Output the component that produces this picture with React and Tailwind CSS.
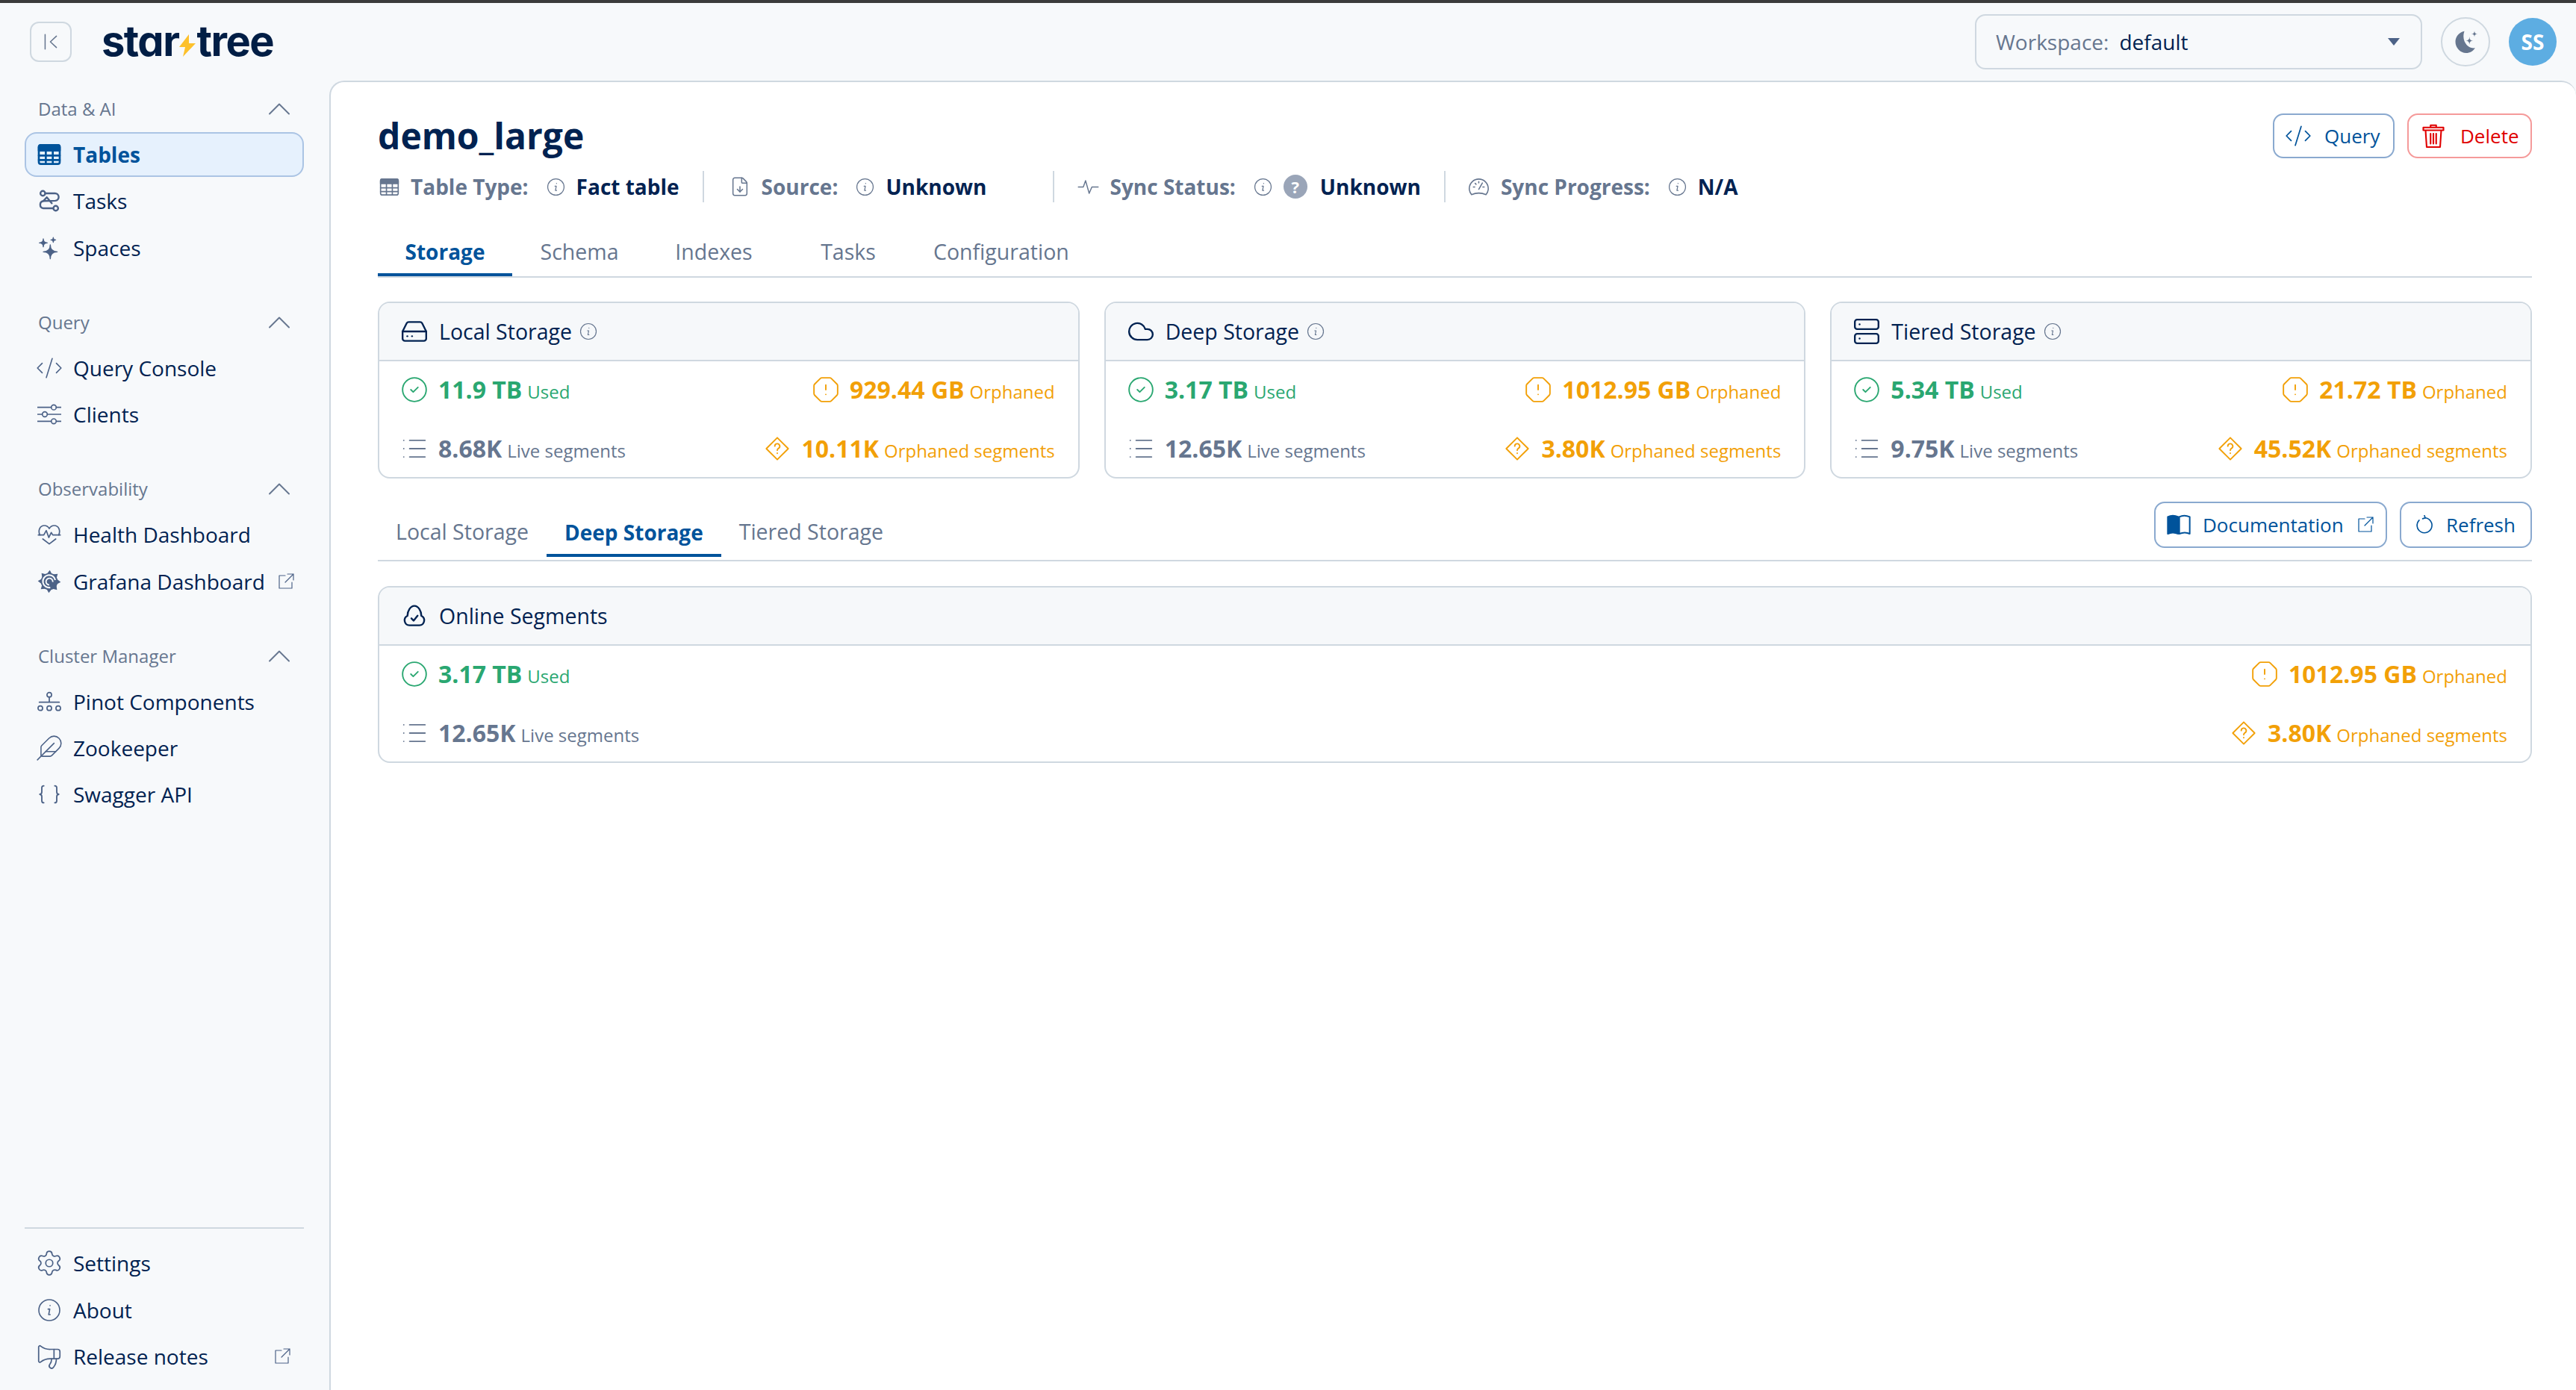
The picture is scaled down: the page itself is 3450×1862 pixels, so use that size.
import {
  ChevronUp, CodeXml, Feather, Settings, Megaphone, Cloud, Server, HardDrive,
  CircleCheck, OctagonAlert, List, FileDown,
} from 'lucide-react';

const star = (cx, cy, r) =>
  `M${cx} ${cy - r}Q${cx} ${cy} ${cx + r} ${cy}Q${cx} ${cy} ${cx} ${cy + r}Q${cx} ${cy} ${cx - r} ${cy}Q${cx} ${cy} ${cx} ${cy - r}Z`;

const Svg = ({ className = '', sw = 1.5, box = '0 0 24 24', children }) => (
  <svg viewBox={box} fill="none" stroke="currentColor" strokeWidth={sw} strokeLinecap="round" strokeLinejoin="round" className={`shrink-0 ${className}`}>
    {children}
  </svg>
);

const TableIcon = ({ className, filled }) => (
  <Svg className={className} sw={filled ? 2 : 1.5}>
    <rect x="1.5" y="2.5" width="21" height="19" rx="2" />
    <path d="M1.5 4.5a2 2 0 0 1 2-2h17a2 2 0 0 1 2 2V8h-21z" fill="currentColor" />
    <path d="M1.5 13h21M1.5 17.5h21M8.5 8v13.5M15.5 8v13.5" />
  </Svg>
);
const TasksIcon = ({ className }) => (
  <Svg className={className} sw={1.8}>
    <circle cx="5.5" cy="4.5" r="2.4" />
    <circle cx="18.5" cy="19.5" r="2.4" />
    <path d="M8 4.5h9.5a3.7 3.7 0 0 1 .5 7.4L6 12.2a3.7 3.7 0 0 0 0 7.3h10" />
    <path d="M9.5 8.5l5 6M6 12.200l3.500-3.700" />
  </Svg>
);
const SparkIcon = ({ className }) => (
  <svg viewBox="0 0 24 24" fill="currentColor" stroke="currentColor" strokeWidth="1" strokeLinejoin="round" className={`shrink-0 ${className}`}>
    <path d={star(13, 16, 7)} />
    <path d={star(6, 7, 4)} />
    <path d={star(16, 4, 2.4)} />
  </svg>
);
const SlidersIcon = ({ className }) => (
  <Svg className={className} sw={1.2}>
    <path d="M0 5h14M19 5h5M0 12h5M10 12h14M0 19h14M19 19h5" />
    <circle cx="16.500" cy="5" r="2.500" />
    <circle cx="7.500" cy="12" r="2.500" />
    <circle cx="16.500" cy="19" r="2.500" />
  </Svg>
);
const HeartIcon = ({ className }) => (
  <Svg className={className} sw={1.3}>
    <path d="M2.500 12.500C.5 8 2.500 3 7 3c2.500 0 4 1.300 5 3 1-1.700 2.500-3 5-3 4.500 0 6.500 5 4.500 9.500" />
    <path d="M1 12.500h5.500l2.500-4.500 2.500 7 2.500-5 1.500 2.500H23" />
    <path d="M5.500 16.500L12 21.500l6.500-5" />
  </Svg>
);
const GrafanaIcon = ({ className }) => (
  <svg viewBox="0 0 24 24" className={`shrink-0 ${className}`}>
    {[0, 45, 90, 135, 180, 225, 270, 315].map((a) => (
      <path key={a} d="M9 5L12.500 .5 15 5z" fill="currentColor" transform={`rotate(${a} 12 12)`} />
    ))}
    <circle cx="12" cy="12" r="8.500" fill="currentColor" />
    <path d="M18 10.500A6.300 6.300 0 1 0 13 18" fill="none" stroke="#f7f9fb" strokeWidth="1.600" />
    <path d="M15.500 12.500a3.400 3.400 0 1 0-3.500 3" fill="none" stroke="#f7f9fb" strokeWidth="1.400" />
  </svg>
);
const SitemapIcon = ({ className }) => (
  <Svg className={className} sw={1.3}>
    <circle cx="12" cy="5" r="2.300" />
    <path d="M12 7.500v5M2 12.500h20" />
    <circle cx="3" cy="18.500" r="2.300" />
    <circle cx="12" cy="18.500" r="2.300" />
    <circle cx="21" cy="18.500" r="2.300" />
  </Svg>
);
const BracesIcon = ({ className }) => (
  <Svg className={className} sw={1.4}>
    <path d="M6.500 3.500c-1.500 0-2 .8-2 2v4c0 1.300-.7 2.300-2 2.500 1.300.2 2 1.200 2 2.500v4c0 1.200.5 2 2 2" />
    <path d="M17.500 3.500c1.500 0 2 .8 2 2v4c0 1.300.7 2.300 2 2.500-1.300.2-2 1.200-2 2.500v4c0 1.200-.5 2-2 2" />
  </Svg>
);
const InfoIcon = ({ className }) => (
  <Svg className={className} sw={1.2}>
    <circle cx="12" cy="12" r="10.500" />
    <path d="M12.800 7.300v.2M10.800 11h1.700l-1.100 5.500h1.500" />
  </Svg>
);
const ExternalIcon = ({ className }) => (
  <Svg className={className} sw={1.2}>
    <path d="M11 4H3v17h17v-8M14 2h8v8M22 2L11 13" />
  </Svg>
);
const PulseIcon = ({ className }) => (
  <Svg className={className} sw={1.2}>
    <path d="M1 12h5.500l2.500-7 4 14 3-7h7" />
  </Svg>
);
const GaugeIcon = ({ className }) => (
  <Svg className={className} sw={1.3}>
    <path d="M4 20.500a10.500 10.500 0 1 1 16 0c-5-2.200-11-2.200-16 0z" />
    <path d="M12 6v1.500M6 12h1.500M16.500 12H18M8 8l1 1M16 7.500l-4 7" />
  </Svg>
);
const DiamondHelp = ({ className }) => (
  <Svg className={className} sw={1.4}>
    <path d="M12 1 23 12 12 23 1 12z" />
    <path d="M9.500 9.500a2.500 2.500 0 1 1 3.700 2.200c-.8.500-1.200 1-1.200 2M12 16.500v.2" />
  </Svg>
);
const CloudCheckIcon = ({ className }) => (
  <Svg className={className} sw={1.8}>
    <path d="M7 21.500h10a5 5 0 0 0 2-9.500c0-5-3-10-7-10s-7 5-7 10a5 5 0 0 0 2 9.500z" />
    <path d="M9 14.500l2.200 2.300 4-5" />
  </Svg>
);
const BookIcon = ({ className }) => (
  <svg viewBox="0 0 24 24" className={`shrink-0 ${className}`} fill="none" stroke="currentColor" strokeWidth="1.500" strokeLinejoin="round">
    <path d="M1 4c3-1.500 7-1.500 10.500 0v17C8 19.500 4 19.500 1 21z" fill="currentColor" />
    <path d="M12.500 4c3-1.500 7-1.500 10.500 0v17c-3-1.500-7-1.500-10.500 0z" />
  </svg>
);
const RefreshIcon = ({ className }) => (
  <Svg className={className} sw={1.5}>
    <path d="M12.500 3.500a9.200 9.200 0 1 1-7 2.800" />
    <path d="M12 .5l1 3-3.200 1" />
  </Svg>
);
const TrashIcon = ({ className }) => (
  <Svg className={className} sw={1.4}>
    <path d="M3 4.500h18v2.500H3zM9.500 4.500V2.500h5v2M5 7l1 15h12l1-15M9.500 10v9M12 10v9M14.500 10v9" />
  </Svg>
);
const MoonIcon = ({ className }) => (
  <svg viewBox="0 0 24 24" fill="currentColor" className={`shrink-0 ${className}`}>
    <path d="M11 2.500C6 3.500 3 7.500 3 12c0 5.500 4.500 10 9.500 10 3.500 0 6.500-1.800 8-4.500-6.500 1-12.500-6.500-9.500-15z" />
    <path d={star(15.500, 11, 3.500)} />
    <path d={star(20, 5, 2.800)} />
  </svg>
);
const CollapseIcon = ({ className }) => (
  <Svg className={className} sw={1.4}>
    <path d="M5 3v18M19 5l-7.500 7 7.500 7" />
  </Svg>
);

const ICON = 'w-8 h-8 text-[#4c6287]';
const ICON_LG = 'w-[38px] h-[38px] -m-[3px] text-[#4c6287]';

const NavItem = ({ icon, label, external, active }) => (
  <div className={`flex h-[60px] items-center gap-4 rounded-[16px] border-2 pl-[15px] pr-[15px] text-[28px] ${active ? 'border-[#abc4e4] bg-[#e6f1fd] font-bold text-[#00539b]' : 'border-transparent text-[#012251]'}`}>
    {icon}
    <span className="flex-1 whitespace-nowrap">{label}</span>
    {external && <ExternalIcon className="h-6 w-6 text-[#4c6287]" />}
  </div>
);

const NavSection = ({ title, className = '', children }) => (
  <div className={className}>
    <div className="flex h-[62px] items-center justify-between pl-[18px] pr-5 text-[24px] text-[#66768f]">
      <span>{title}</span>
      <ChevronUp className="-my-4 -mr-[13px] h-[52px] w-[52px] text-[#66768f]" strokeWidth={0.900} />
    </div>
    <div className="flex flex-col gap-[2.400px]">{children}</div>
  </div>
);

const Sidebar = () => (
  <aside className="flex w-[441px] shrink-0 flex-col pl-[33px] pr-[34px] pt-[7px] pb-[15px]">
    <NavSection title="Data & AI">
      <NavItem active icon={<TableIcon filled className="h-8 w-8" />} label="Tables" />
      <NavItem icon={<TasksIcon className={ICON} />} label="Tasks" />
      <NavItem icon={<SparkIcon className={ICON} />} label="Spaces" />
    </NavSection>
    <NavSection title="Query" className="mt-[39px]">
      <NavItem icon={<CodeXml className={ICON_LG} strokeWidth={1.000} />} label="Query Console" />
      <NavItem icon={<SlidersIcon className={ICON} />} label="Clients" />
    </NavSection>
    <NavSection title="Observability" className="mt-[39px]">
      <NavItem icon={<HeartIcon className={ICON} />} label="Health Dashboard" />
      <NavItem icon={<GrafanaIcon className={ICON} />} label="Grafana Dashboard" external />
    </NavSection>
    <NavSection title="Cluster Manager" className="mt-[39px]">
      <NavItem icon={<SitemapIcon className={ICON} />} label="Pinot Components" />
      <NavItem icon={<Feather className={ICON_LG} strokeWidth={1.000} />} label="Zookeeper" />
      <NavItem icon={<BracesIcon className={ICON} />} label="Swagger API" />
    </NavSection>
    <div className="mt-auto border-t-2 border-[#cfd8e0] pt-[16px]">
      <div className="flex flex-col gap-[2.400px]">
        <NavItem icon={<Settings className={ICON_LG} strokeWidth={1.100} />} label="Settings" />
        <NavItem icon={<InfoIcon className={ICON} />} label="About" />
        <NavItem icon={<Megaphone className={`${ICON_LG} -scale-x-100`} strokeWidth={1.100} />} label="Release notes" external />
      </div>
    </div>
  </aside>
);

const Logo = () => (
  <div className="flex items-center font-['Inter',sans-serif] text-[56px] font-bold leading-none tracking-[-1.500px] text-[#011e45] [font-feature-settings:'cv11']">
    <span>star</span>
    <svg viewBox="0 0 22 30" className="mx-[1px] mt-3 h-8 w-[22px] shrink-0">
      <path d="M13 0L0 17h8l-3 13L22 12h-9z" fill="#fdc12c" />
    </svg>
    <span>tree</span>
  </div>
);

const TopBar = () => (
  <header className="flex h-[104px] shrink-0 items-center pl-10 pr-[26px]">
    <button className="flex h-[54px] w-14 items-center justify-center rounded-[12px] border-2 border-[#cfd8e0] text-[#66768f]">
      <CollapseIcon className="h-[26px] w-[26px]" />
    </button>
    <div className="ml-10 mt-[-2px]"><Logo /></div>
    <div className="ml-auto flex items-center">
      <div className="flex h-[74px] w-[599px] items-center rounded-[14px] border-2 border-[#cfd8e0] pl-[26px] pr-[28px] text-[28px]">
        <span className="text-[#66768f]">Workspace:</span>
        <span className="ml-[14px] text-[#012251]">default</span>
        <svg viewBox="0 0 16 10" className="ml-auto h-[10px] w-4 text-[#4c6287]"><path d="M0 0h16L8 10z" fill="currentColor" /></svg>
      </div>
      <div className="ml-[25px] flex h-[66px] w-[66px] items-center justify-center rounded-full border-2 border-[#cfd8e0] text-[#66768f]">
        <MoonIcon className="h-[36px] w-[36px]" />
      </div>
      <div className="ml-[25px] flex h-16 w-16 items-center justify-center rounded-full bg-[#5dade2] text-[28px] font-bold text-white">SS</div>
    </div>
  </header>
);

const MetaDivider = ({ className = '' }) => <div className={`h-[42px] w-[2px] bg-[#cfd8e0] ${className}`} />;

const Meta = ({ icon, label, children, className = '' }) => (
  <div className={`flex items-center ${className}`}>
    <span className="flex w-[30px] justify-center text-[#66768f]">{icon}</span>
    <span className="ml-[14px] whitespace-nowrap text-[28px] font-bold text-[#66768f]">{label}</span>
    <InfoIcon className="ml-6 h-[25px] w-[25px] text-[#66768f]" />
    {children}
  </div>
);

const Value = ({ children }) => <span className="ml-[15px] whitespace-nowrap text-[28px] font-bold text-[#012251]">{children}</span>;

const MetaRow = () => (
  <div className="mt-[13px] flex h-[42px] items-center">
    <Meta icon={<TableIcon className="h-[27px] w-[27px]" />} label="Table Type:"><Value>Fact table</Value></Meta>
    <MetaDivider className="ml-[31px]" />
    <Meta className="ml-[33px]" icon={<FileDown className="h-[28px] w-[28px]" strokeWidth={1.300} />} label="Source:"><Value>Unknown</Value></Meta>
    <MetaDivider className="ml-[89px]" />
    <Meta className="ml-[30px]" icon={<PulseIcon className="h-[29px] w-[29px]" />} label="Sync Status:">
      <span className="ml-[15px] flex h-8 w-8 items-center justify-center rounded-full bg-[#9aa5b8] text-[22px] font-bold text-white">?</span>
      <span className="ml-[17px] whitespace-nowrap text-[28px] font-bold text-[#012251]">Unknown</span>
    </Meta>
    <MetaDivider className="ml-[31px]" />
    <Meta className="ml-[30px]" icon={<GaugeIcon className="h-[29px] w-[29px]" />} label="Sync Progress:"><Value>N/A</Value></Meta>
  </div>
);

const MainTabs = () => {
  const tabs = ['Storage', 'Schema', 'Indexes', 'Tasks', 'Configuration'];
  return (
    <div className="mt-[33px] flex border-b-2 border-[#cfd8e0]">
      {tabs.map((t, i) => (
        <div
          key={t}
          className={`flex h-[66px] min-w-[180px] items-center justify-center px-6 ${i === 0 ? 'border-b-4 border-[#00539b] pt-1 text-[28px] font-bold text-[#00539b]' : 'text-[28.500px] text-[#66768f]'}`}
        >
          {t}
        </div>
      ))}
    </div>
  );
};

const Stat = ({ icon, value, label, color, className = '' }) => (
  <div className={`flex h-10 items-center ${color} ${className}`}>
    {icon}
    <span className="ml-4 flex items-baseline whitespace-nowrap">
      <span className="text-[32px] font-bold">{value}</span>
      <span className="ml-[7px] text-[24px]">{label}</span>
    </span>
  </div>
);

const GREEN = 'text-[#2aa771]';
const ORANGE = 'text-[#f2a007]';
const SLATE = 'text-[#66768f]';
const STAT_ICON = 'h-[38px] w-[38px] -mx-[3px] shrink-0';

const StorageCard = ({ icon, title, info = true, used, orphaned, live, orphanedSegs }) => (
  <div className="overflow-hidden rounded-[16px] border-2 border-[#cfd8e0]">
    <div className="box-content flex h-[76px] items-center border-b-2 border-[#cfd8e0] bg-[#f6f8fa] pl-[31px]">
      <span className="flex w-8 justify-center text-[#012251]">{icon}</span>
      <span className="ml-[17px] whitespace-nowrap text-[28.500px] text-[#012251]">{title}</span>
      {info && <InfoIcon className="ml-[10px] h-6 w-6 text-[#66768f]" />}
    </div>
    <div className="flex flex-col gap-[39px] pl-[31px] pr-[31px] pt-[18px] pb-[18px]">
      <div className="flex justify-between">
        <Stat color={GREEN} value={used} label="Used" icon={<CircleCheck className={STAT_ICON} strokeWidth={1.200} />} />
        <Stat color={ORANGE} value={orphaned} label="Orphaned" icon={<OctagonAlert className={STAT_ICON} strokeWidth={1.200} />} />
      </div>
      <div className="flex justify-between">
        <Stat color={SLATE} value={live} label="Live segments" icon={<List className={STAT_ICON} strokeWidth={1.200} />} />
        <Stat color={ORANGE} value={orphanedSegs} label="Orphaned segments" icon={<DiamondHelp className="h-8 w-8 shrink-0" />} />
      </div>
    </div>
  </div>
);

const OutlineButton = ({ children, className = '' }) => (
  <button className={`flex items-center rounded-[14px] border-2 border-[#8aa9cf] text-[26px] text-[#00539b] ${className}`}>
    {children}
  </button>
);

const SubTabs = () => (
  <div className="mt-[31px] flex h-[80px] items-start justify-between border-b-2 border-[#cfd8e0]">
    <div className="flex h-[74px] items-center">
      <div className="flex h-full items-center px-6 pt-[7px] text-[28.500px] text-[#66768f]">Local Storage</div>
      <div className="flex h-full items-center border-b-4 border-[#00539b] px-6 pt-[11px] text-[28px] font-bold text-[#00539b]">Deep Storage</div>
      <div className="flex h-full items-center px-6 pt-[7px] text-[28.500px] text-[#66768f]">Tiered Storage</div>
    </div>
    <div className="flex gap-[17px]">
      <OutlineButton className="h-[62px] w-[312px] pl-[15px]">
        <BookIcon className="h-8 w-8" />
        <span className="ml-4">Documentation</span>
        <ExternalIcon className="ml-auto mr-[15px] h-6 w-6" />
      </OutlineButton>
      <OutlineButton className="h-[62px] w-[177px] pl-[18px]">
        <RefreshIcon className="h-[26px] w-[26px]" />
        <span className="ml-[16px]">Refresh</span>
      </OutlineButton>
    </div>
  </div>
);

export default function App() {
  return (
    <div className="flex h-screen w-full flex-col overflow-hidden border-t-4 border-[#3b3b3b] bg-[#f7f9fb] font-['Open_Sans',sans-serif]">
      <TopBar />
      <div className="flex min-h-0 flex-1">
        <Sidebar />
        <main className="min-w-0 flex-1 rounded-t-[20px] border-l-2 border-t-2 border-[#cfd8e0] bg-white pl-[63px] pr-[59px] pt-[42px]">
          <div className="flex h-16 items-start justify-between">
            <h1 className="-mt-[2px] text-[48px] font-bold leading-[64px] text-[#012251]">demo_large</h1>
            <div className="flex gap-[17px]">
              <OutlineButton className="h-[60px] w-[163px] pl-[13px]">
                <CodeXml className="h-[38px] w-[38px]" strokeWidth={1.100} />
                <span className="ml-4">Query</span>
              </OutlineButton>
              <button className="flex h-[60px] w-[167px] items-center rounded-[14px] border-2 border-[#f59a9a] pl-[15px] text-[26px] text-[#e00000]">
                <TrashIcon className="h-9 w-9" />
                <span className="ml-[18px]">Delete</span>
              </button>
            </div>
          </div>
          <MetaRow />
          <MainTabs />
          <div className="mt-8 grid grid-cols-3 gap-[33px]">
            <StorageCard icon={<HardDrive className="-m-[3px] h-[38px] w-[38px] shrink-0" strokeWidth={1.500} />} title="Local Storage" used="11.9 TB" orphaned="929.44 GB" live="8.68K" orphanedSegs="10.11K" />
            <StorageCard icon={<Cloud className="-m-[3px] h-[38px] w-[38px] shrink-0" strokeWidth={1.500} />} title="Deep Storage" used="3.17 TB" orphaned="1012.95 GB" live="12.65K" orphanedSegs="3.80K" />
            <StorageCard icon={<Server className="-m-[3px] h-[38px] w-[38px] shrink-0" strokeWidth={1.500} />} title="Tiered Storage" used="5.34 TB" orphaned="21.72 TB" live="9.75K" orphanedSegs="45.52K" />
          </div>
          <SubTabs />
          <div className="mt-[33px]">
            <StorageCard icon={<CloudCheckIcon className="h-8 w-8" />} title="Online Segments" info={false} used="3.17 TB" orphaned="1012.95 GB" live="12.65K" orphanedSegs="3.80K" />
          </div>
        </main>
      </div>
    </div>
  );
}
